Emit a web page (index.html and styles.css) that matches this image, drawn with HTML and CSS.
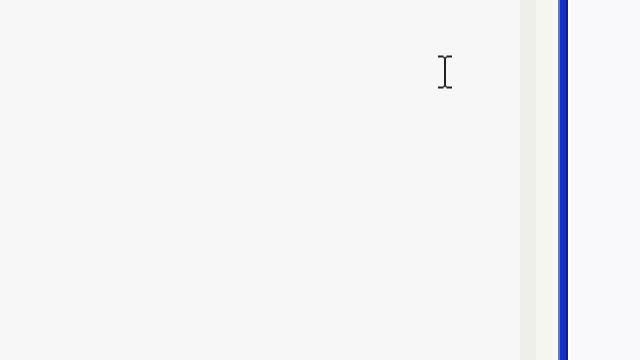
FILE: index.html
```html
<!DOCTYPE html>
<html lang="en">
<head>
    <meta charset="UTF-8">
    <meta name="viewport" content="width=device-width, initial-scale=1.0">
    <title>Editor</title>
<link rel="stylesheet" href="styles.css">
</head>
<body>
    <div class="window">
        <!-- text area -->
        <div class="editor">
            <svg class="cursor" width="16" height="34" viewBox="0 0 16 34">
                <path d="M1 1.5h5.5M9.5 1.5h5.5M8 2v30M1 32.5h5.5M9.5 32.5h5.5" stroke="#222" stroke-width="2" fill="none"/>
                <path d="M6 2.5h4M6 31.5h4" stroke="#444" stroke-width="1.5"/>
            </svg>
        </div>
        <!-- scrollbar -->
        <div class="scroll">
            <div class="track"></div>
            <div class="track light"></div>
            <div class="gap"></div>
        </div>
        <div class="split"></div>
        <div class="pane"></div>
    </div>
</body>
</html>
```

FILE: styles.css
```css
*{
    margin: 0;
    padding: 0;
    box-sizing: border-box;
}
body{
    background: #f7f7f7;
    font-family: "Liberation Sans", Arial, sans-serif;
    height: 100vh;
    overflow: hidden;
}
.window{
    display: flex;
    height: 100vh;
}
.editor{
    position: relative;
    width: 520px;
    background: #f7f7f7;
}
.cursor{
    position: absolute;
    left: 437px;
    top: 55px;
}
.scroll{
    display: flex;
    width: 38px;
}
.track{
    width: 16px;
    background: #eeeeea;
}
.track.light{
    background: #f6f6f1;
}
.gap{
    width: 6px;
    background: #faf8f6;
}
.split{
    width: 10px;
    background: #1430c4;
    border-left: 2px solid #6a78a8;
    border-right: 2px solid #0c1e9a;
}
.pane{
    flex: 1;
    background: #f9f9fb;
    border-left: 3px solid #ffffff;
}
```
